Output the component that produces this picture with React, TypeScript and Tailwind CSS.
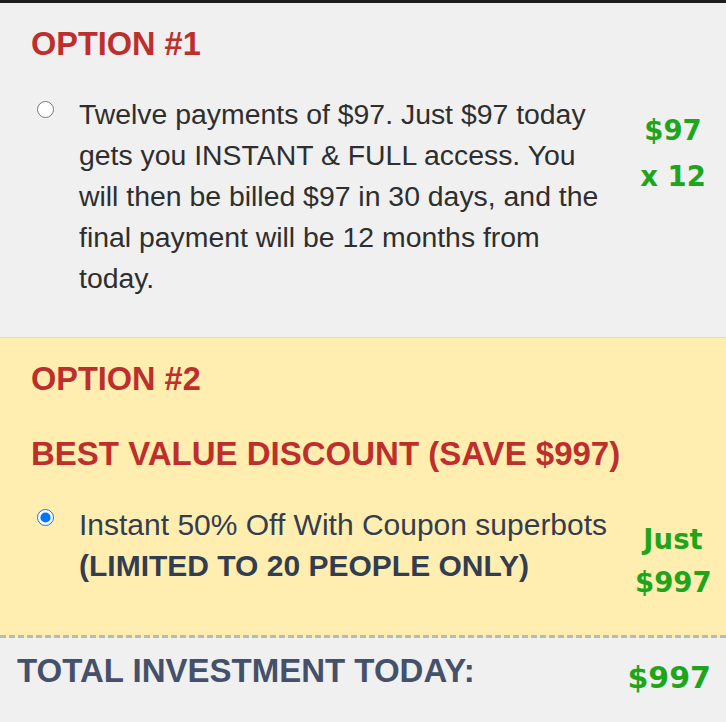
import React from "react";

const sans = "font-['Liberation_Sans',Arial,sans-serif]";
const green = "font-['DejaVu_Sans',sans-serif] font-bold text-[#1fa51c] text-center whitespace-nowrap";

function Radio({ checked, offset }: { checked?: boolean; offset: string }) {
  return (
    <input
      type="radio"
      readOnly
      checked={!!checked}
      className={`${offset} w-[17px] h-[17px] shrink-0 accent-[#0075ff]`}
    />
  );
}

export default function App() {
  return (
    <div className={`w-[726px] h-[722px] overflow-hidden bg-[#f0f0f0] ${sans}`}>
      <div className="h-[3px] bg-[#1c1c1c]" />

      {/* option 1 */}
      <section className="pl-[31px] pr-[15px] pt-[21px] pb-[38px] border-b border-[#dcdcdc]">
        <h2 className="text-[32.5px] leading-[40px] font-bold text-[#bd2f2d]">OPTION #1</h2>
        <div className="flex mt-[30px]">
          <div className="w-[48px] pl-[6px]">
            <Radio offset="mt-[7px]" />
          </div>
          <p className="w-[535px] text-[28.4px] leading-[41px] text-[#2e2e2e]">
            Twelve payments of $97. Just $97 today gets you INSTANT &amp; FULL access. You will then be billed $97 in
            30 days, and the final payment will be 12 months from today.
          </p>
          <div className={`ml-auto w-[76px] mt-[13px] text-[27.5px] leading-[46px] ${green}`}>
            <div>$97</div>
            <div>x 12</div>
          </div>
        </div>
      </section>

      {/* option 2 */}
      <section className="pl-[31px] pr-[15px] pt-[21px] pb-[31px] bg-[#ffeeb0] border-b-[3px] border-dashed border-[#b5bbb6]">
        <h2 className="text-[32.5px] leading-[40px] font-bold text-[#bd2f2d]">OPTION #2</h2>
        <h3 className="mt-[35px] text-[33px] leading-[40px] font-bold text-[#bd2f2d]">
          BEST VALUE DISCOUNT (SAVE $997)
        </h3>
        <div className="flex mt-[30px]">
          <div className="w-[48px] pl-[6px]">
            <Radio checked offset="mt-[5px]" />
          </div>
          <p className="w-[550px] text-[30px] leading-[41px] text-[#333d50]">
            Instant 50% Off With Coupon superbots
            <br />
            <b>(LIMITED TO 20 PEOPLE ONLY)</b>
          </p>
          <div className={`ml-auto w-[76px] mt-[14px] text-[27.5px] leading-[43px] ${green}`}>
            <div>Just</div>
            <div>$997</div>
          </div>
        </div>
      </section>

      {/* total */}
      <div className="flex items-start justify-between pl-[17px] pr-[15px] pt-[11px]">
        <div className="text-[33px] leading-[44px] font-bold text-[#45506a]">TOTAL INVESTMENT TODAY:</div>
        <div className="mt-[7px] font-['DejaVu_Sans',sans-serif] font-bold text-[#1fa51c] text-[30px] leading-[44px]">
          $997
        </div>
      </div>
    </div>
  );
}
